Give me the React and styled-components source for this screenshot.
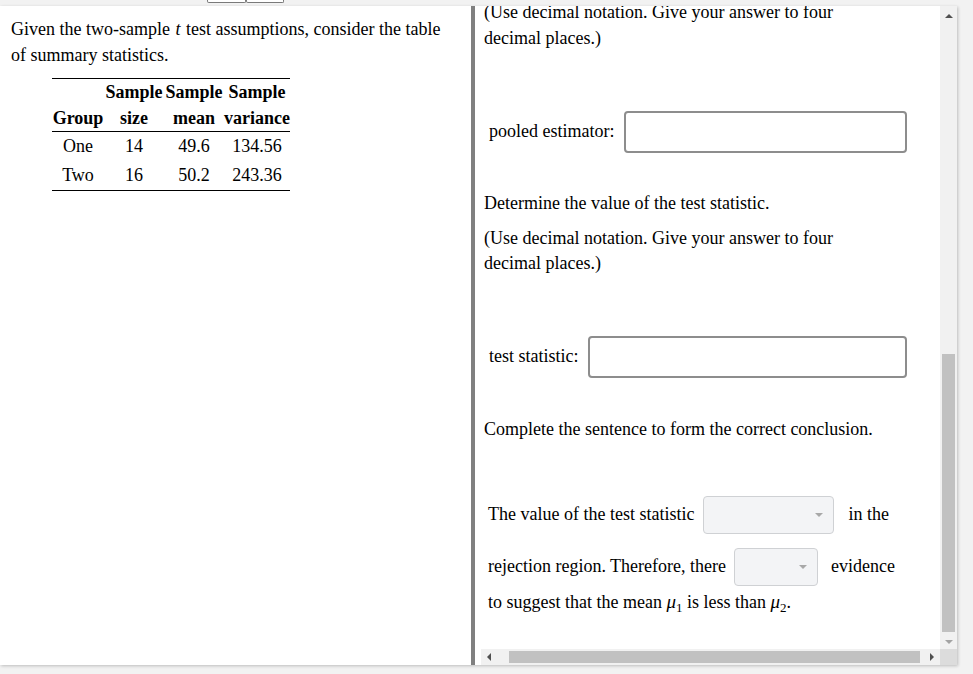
import React, { useLayoutEffect, useRef } from "react";
import styled, { createGlobalStyle } from "styled-components";

const Global = createGlobalStyle`
  html, body { margin: 0; padding: 0; background: #f2f2f2; }
  body { font-family: "Liberation Serif", "Times New Roman", serif; color: #000; }
  * { box-sizing: border-box; }
`;

const Page = styled.div`
  width: 973px;
  height: 674px;
  display: flex;
  flex-direction: column;
  background: #f2f2f2;
  overflow: hidden;
`;

const TopStrip = styled.div`
  height: 6px;
  display: flex;
  padding-left: 207px;
`;

const TabStub = styled.div`
  width: ${(p) => p.$w}px;
  height: 3px;
  background: #fff;
  border: 1px solid #7a7a7a;
  border-top: none;
  border-radius: 0 0 2px 2px;
`;

const Card = styled.div`
  width: 957px;
  height: 659px;
  display: flex;
  background: #fff;
  box-shadow: 1px 1px 3px rgba(0, 0, 0, 0.22);
`;

const LeftPane = styled.div`
  width: 471px;
  padding: 10px 20px 0 11px;
  font-size: 18px;
  line-height: 26px;
`;

const Para = styled.p`
  margin: ${(p) => p.$mt || 0}px 0 0;
  font-size: 18px;
  line-height: ${(p) => p.$lh || 25.6}px;
  width: ${(p) => (p.$w ? `${p.$w}px` : "auto")};
  padding-left: ${(p) => p.$pl || 0}px;
  white-space: ${(p) => (p.$nowrap ? "nowrap" : "normal")};
`;

const MathI = styled.i`
  font-family: "Liberation Serif", "Times New Roman", serif;
  font-style: italic;
  padding: 0 1px;
`;

const Table = styled.table`
  margin: 10px 0 0 41px;
  border-collapse: collapse;
  font-size: 18px;
  text-align: center;
`;

const HeadRow = styled.tr`
  border-top: ${(p) => (p.$top ? "1px solid #000" : "none")};
  border-bottom: ${(p) => (p.$bottom ? "1px solid #000" : "none")};
`;

const Th = styled.th`
  width: ${(p) => p.$w}px;
  padding: 0;
  height: 26px;
  line-height: 26px;
  font-weight: bold;
  white-space: nowrap;
`;

const BodyRow = styled.tr`
  border-bottom: ${(p) => (p.$last ? "1px solid #000" : "none")};
`;

const Td = styled.td`
  padding: 0;
  height: 29px;
  line-height: 29px;
  font-weight: normal;
`;

const Divider = styled.div`
  width: 4px;
  background: #808080;
`;

const RightPane = styled.div`
  width: 482px;
  display: flex;
  flex-direction: column;
`;

const MainRow = styled.div`
  flex: 1;
  display: flex;
  min-height: 0;
`;

const Viewport = styled.div`
  width: 465px;
  overflow: hidden;
  padding-left: 9px;
  font-size: 18px;
  line-height: 25.6px;
`;

const Content = styled.div`
  padding-bottom: 40px;
`;

const AnswerRow = styled.div`
  width: 423px;
  margin-top: ${(p) => p.$mt}px;
  padding-left: 5px;
  display: flex;
  align-items: center;
  gap: 9.5px;
`;

const Label = styled.span`
  white-space: nowrap;
`;

const TextInput = styled.div`
  flex: 1;
  height: 42px;
  border: 2px solid #8d8d8d;
  border-radius: 4px;
  background: #fff;
`;

const SentenceRow = styled.div`
  margin-top: ${(p) => p.$mt}px;
  padding-left: 4px;
  display: flex;
  align-items: center;
  height: 38px;
  white-space: nowrap;
`;

const Select = styled.div`
  width: ${(p) => p.$w}px;
  height: 38px;
  margin: 0 ${(p) => p.$mr}px 0 ${(p) => p.$ml}px;
  background: #f3f4f6;
  border: 1px solid #cfd1d4;
  border-radius: 4px;
  display: flex;
  align-items: center;
  justify-content: flex-end;
  padding-right: 10px;
`;

const Caret = styled.span`
  width: 0;
  height: 0;
  border-left: 4px solid transparent;
  border-right: 4px solid transparent;
  border-top: 4px solid #a8a8a8;
`;

const Mu = styled.span`
  font-style: italic;
  font-size: 19px;
`;

const Sub = styled.span`
  font-size: 13px;
  vertical-align: -4px;
  line-height: 0;
`;

const VBar = styled.div`
  width: 17px;
  background: #f1f1f1;
  display: flex;
  flex-direction: column;
`;

const ArrowBox = styled.div`
  width: ${(p) => (p.$h ? 16 : 17)}px;
  height: ${(p) => (p.$h ? 16 : 17)}px;
  flex: none;
  display: flex;
  align-items: center;
  justify-content: center;
`;

const VTrack = styled.div`
  flex: 1;
  display: flex;
  flex-direction: column;
  justify-content: flex-end;
  align-items: center;
`;

const VThumb = styled.div`
  width: 13px;
  height: 278px;
  background: #c1c1c1;
`;

const HBarRow = styled.div`
  height: 16px;
  display: flex;
  padding-left: 6px;
  background: #fff;
`;

const HTrack = styled.div`
  flex: 1;
  display: flex;
  align-items: center;
  background: #f1f1f1;
`;

const HThumb = styled.div`
  flex: 1;
  height: 12px;
  margin: 0 4px 0 12px;
  background: #c1c1c1;
`;

const Corner = styled.div`
  width: 17px;
  background: #dcdcdc;
`;

const Tri = ({ dir, color }) => {
  const pts = {
    up: "0,7 4,3 8,7",
    down: "0,3 8,3 4,7",
    left: "6,0 6,8 2,4",
    right: "2,0 2,8 6,4",
  }[dir];
  return (
    <svg width="8" height="8" viewBox="0 0 8 8">
      <polygon points={pts} fill={color} />
    </svg>
  );
};

export default function App() {
  const vp = useRef(null);
  useLayoutEffect(() => {
    if (vp.current) vp.current.scrollTop = 6;
  }, []);

  return (
    <Page>
      <Global />
      <TopStrip>
        <TabStub $w={39} />
        <TabStub $w={38} />
      </TopStrip>
      <Card>
        <LeftPane>
          <Para $lh={26}>
            Given the two-sample <MathI>t</MathI> test assumptions, consider the
            table of summary statistics.
          </Para>
          <Table>
            <thead>
              <HeadRow $top>
                <Th $w={52}></Th>
                <Th $w={60}>Sample</Th>
                <Th $w={60}>Sample</Th>
                <Th $w={66}>Sample</Th>
              </HeadRow>
              <HeadRow $bottom>
                <Th $w={52}>Group</Th>
                <Th $w={60}>size</Th>
                <Th $w={60}>mean</Th>
                <Th $w={66}>variance</Th>
              </HeadRow>
            </thead>
            <tbody>
              <BodyRow>
                <Td>One</Td>
                <Td>14</Td>
                <Td>49.6</Td>
                <Td>134.56</Td>
              </BodyRow>
              <BodyRow $last>
                <Td>Two</Td>
                <Td>16</Td>
                <Td>50.2</Td>
                <Td>243.36</Td>
              </BodyRow>
            </tbody>
          </Table>
        </LeftPane>
        <Divider />
        <RightPane>
          <MainRow>
            <Viewport ref={vp}>
              <Content>
                <Para $w={398}>
                  (Use decimal notation. Give your answer to four decimal places.)
                </Para>
                <AnswerRow $mt={60}>
                  <Label>pooled estimator:</Label>
                  <TextInput />
                </AnswerRow>
                <Para $mt={38} $w={398}>
                  Determine the value of the test statistic.
                </Para>
                <Para $mt={9} $w={398}>
                  (Use decimal notation. Give your answer to four decimal places.)
                </Para>
                <AnswerRow $mt={59}>
                  <Label>test statistic:</Label>
                  <TextInput />
                </AnswerRow>
                <Para $mt={39} $w={398}>
                  Complete the sentence to form the correct conclusion.
                </Para>
                <SentenceRow $mt={53}>
                  The value of the test statistic
                  <Select $w={131} $ml={9} $mr={14}>
                    <Caret />
                  </Select>
                  in the
                </SentenceRow>
                <SentenceRow $mt={14}>
                  rejection region. Therefore, there
                  <Select $w={84} $ml={8} $mr={13}>
                    <Caret />
                  </Select>
                  evidence
                </SentenceRow>
                <Para $mt={3} $pl={4} $nowrap>
                  to suggest that the mean <Mu>μ</Mu><Sub>1</Sub> is less than{" "}
                  <Mu>μ</Mu><Sub>2</Sub>.
                </Para>
              </Content>
            </Viewport>
            <VBar>
              <ArrowBox>
                <Tri dir="up" color="#505050" />
              </ArrowBox>
              <VTrack>
                <VThumb />
              </VTrack>
              <ArrowBox>
                <Tri dir="down" color="#a3a3a3" />
              </ArrowBox>
            </VBar>
          </MainRow>
          <HBarRow>
            <HTrack>
              <ArrowBox $h>
                <Tri dir="left" color="#505050" />
              </ArrowBox>
              <HThumb />
              <ArrowBox $h>
                <Tri dir="right" color="#505050" />
              </ArrowBox>
            </HTrack>
            <Corner />
          </HBarRow>
        </RightPane>
      </Card>
    </Page>
  );
}
